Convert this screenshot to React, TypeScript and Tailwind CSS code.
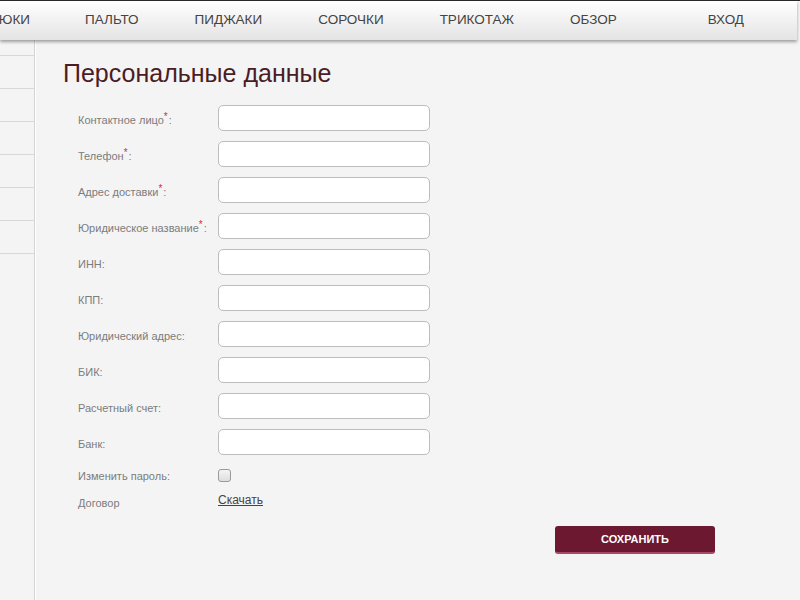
import React from "react";

const navItems = ["БРЮКИ", "ПАЛЬТО", "ПИДЖАКИ", "СОРОЧКИ", "ТРИКОТАЖ", "ОБЗОР"];

const fields = [
  { label: "Контактное лицо", req: true },
  { label: "Телефон", req: true },
  { label: "Адрес доставки", req: true },
  { label: "Юридическое название", req: true },
  { label: "ИНН", req: false },
  { label: "КПП", req: false },
  { label: "Юридический адрес", req: false },
  { label: "БИК", req: false },
  { label: "Расчетный счет", req: false },
  { label: "Банк", req: false },
];

export default function App() {
  return (
    <div className="w-[800px] h-[600px] overflow-hidden bg-[#f4f4f4] font-['Liberation_Sans',Arial,sans-serif] relative">
      <div className="h-px bg-[#2a2a2a]" />
      <div className="w-[797px] h-[39px] bg-gradient-to-b from-white to-[#e4e4e4] shadow-[0_2px_3px_rgba(0,0,0,0.35)] flex items-center text-[13.5px] text-[#444] relative z-10">
        <div className="flex items-center ml-[-47px]">
          {navItems.map((n) => (
            <span key={n} className="px-[28px] first:pr-[27px]">{n}</span>
          ))}
        </div>
        <span className="ml-auto mr-[53px]">ВХОД</span>
      </div>

      <div className="flex h-[560px]">
        <div className="w-[35px] shrink-0 border-r border-[#d4d4d4] shadow-[1px_0_0_#ffffff]">
          <div className="h-[16px] border-b border-[#d8d8d8]" />
          {[0, 1, 2, 3, 4, 5].map((i) => (
            <div key={i} className="h-[33px] border-b border-[#d8d8d8]" />
          ))}
        </div>

        <div className="pl-[28px] pt-[18px]">
          <h1 className="text-[25px] leading-[30px] text-[#4a1c24] mb-[12px]">Персональные данные</h1>

          <div className="pl-[15px]">
            {fields.map((f) => (
              <div key={f.label} className="flex items-center h-[36px]">
                <div className="w-[140px] text-[11px] text-[#7c7c7c] pt-[4px]">
                  {f.label}
                  {f.req && <sup className="text-[#d0303a] text-[10px] relative top-[-4px]">*</sup>}
                  <span className={f.req ? "ml-[1px]" : ""}>:</span>
                </div>
                <div className="w-[212px] h-[26px] bg-white border border-[#bdbdbd] rounded-[5px]" />
              </div>
            ))}

            <div className="flex items-center h-[30px]">
              <div className="w-[140px] text-[11px] text-[#7c7c7c] pt-[2px]">Изменить пароль:</div>
              <div className="w-[13px] h-[13px] border border-[#9a9a9a] rounded-[3px] bg-gradient-to-b from-[#f4f4f4] to-[#dedede]" />
            </div>
            <div className="flex items-center h-[20px]">
              <div className="w-[140px] text-[11px] text-[#7c7c7c] pt-[6px]">Договор</div>
              <a className="text-[12px] text-[#444] underline">Скачать</a>
            </div>

            <div className="flex mt-[16px] pl-[477px]">
              <button className="w-[160px] h-[28px] rounded-[3px] bg-[#6b1830] border-b-[2px] border-[#a84a66] text-white text-[11px] font-bold">
                СОХРАНИТЬ
              </button>
            </div>
          </div>
        </div>
      </div>
    </div>
  );
}
